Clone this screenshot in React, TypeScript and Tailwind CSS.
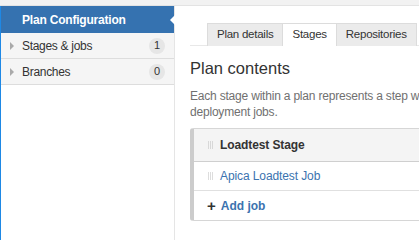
import React from 'react';

function Badge({ n }: { n: number }) {
  return (
    <span className="flex h-[16px] min-w-[16px] items-center justify-center rounded-full bg-[#e6e6e6] px-[4px] text-[11px] text-[#333]">
      {n}
    </span>
  );
}

function Grip() {
  return (
    <svg width="6" height="9" viewBox="0 0 6 9" className="shrink-0">
      {[0, 1, 2].map((c) =>
        [0, 1, 2, 3].map((r) => (
          <rect key={`${c}-${r}`} x={c * 2} y={r * 2 + 0.5} width="1" height="1" fill="#bbb" />
        ))
      )}
    </svg>
  );
}

function NavRow({ label, count }: { label: string; count: number }) {
  return (
    <div className="flex h-[26px] items-center border-b border-[#dddddd] bg-[#f5f5f5] pl-[9px] pr-[9px]">
      <span className="mr-[8px] h-0 w-0 border-y-[4px] border-l-[4px] border-y-transparent border-l-[#aaa]" />
      <span className="flex-1 text-[12px] tracking-[-0.3px] text-[#333]">{label}</span>
      <Badge n={count} />
    </div>
  );
}

const tab = 'mb-[-1px] flex h-[23px] shrink-0 items-center whitespace-nowrap px-[9px] text-[11.5px] tracking-[-0.25px] text-[#333]';

export default function App() {
  return (
    <div className="h-[240px] w-[419px] overflow-hidden bg-white font-['Liberation_Sans',Arial,sans-serif]">
      <div className="h-[6px] border-b border-[#e3e3e3] bg-[#f2f2f2]" />
      <div className="flex h-[234px]">
        {/* sidebar */}
        <aside className="relative w-[175px] shrink-0 border-l border-l-[#1e88e5] border-r border-r-[#e5e5e5]">
          <div className="relative flex h-[27px] items-center bg-[#3572b0] pl-[21px] text-[12px] font-bold tracking-[-0.2px] text-white">
            Plan Configuration
            <span className="absolute right-[-1px] top-[9px] h-0 w-0 border-y-[5px] border-r-[5px] border-y-transparent border-r-white" />
          </div>
          <NavRow label="Stages & jobs" count={1} />
          <NavRow label="Branches" count={0} />
        </aside>

        {/* main */}
        <main className="min-w-0 flex-1 overflow-hidden pl-[15px] pt-[17px]">
          <div className="flex w-[600px] border-b border-[#e8e8e8] pl-[17px]">
            <div className={`${tab} border border-b-0 border-[#dcdcdc] bg-[#ebebeb]`}>Plan details</div>
            <div className={`${tab} border-t border-[#dcdcdc] bg-white`}>Stages</div>
            <div className={`${tab} border border-b-0 border-[#dcdcdc] bg-[#ebebeb]`}>Repositories</div>
            <div className={`${tab} ml-[2px] w-[60px] border border-b-0 border-[#dcdcdc] bg-[#ebebeb]`} />
          </div>

          <h2 className="mt-[10px] whitespace-nowrap text-[16.5px] leading-[24px] text-[#333]">Plan contents</h2>

          <p className="mt-[8px] w-[600px] whitespace-nowrap text-[12px] leading-[16px] tracking-[-0.2px] text-[#707070]">
            Each stage within a plan represents a step within the build process and contains one or more
            <br />
            deployment jobs.
          </p>

          <div className="mt-[8px] w-[560px] overflow-hidden rounded-l-[3px] border border-l-[4px] border-[#d6d6d6] border-l-[#cccccc]">
            <div className="flex h-[33px] items-center gap-[6px] border-b border-[#cfcfcf] bg-[#f4f4f4] pl-[14px]">
              <Grip />
              <span className="text-[12px] font-bold tracking-[-0.1px] text-[#333]">Loadtest Stage</span>
            </div>
            <div className="flex h-[29px] items-center gap-[6px] border-b border-[#e0e0e0] bg-white pl-[14px]">
              <Grip />
              <span className="text-[12px] tracking-[-0.1px] text-[#3b73af]">Apica Loadtest Job</span>
            </div>
            <div className="flex h-[29px] items-center gap-[5px] bg-white pl-[13px] text-[12px] font-bold text-[#3b73af]">
              <span className="text-[15px] leading-none text-[#333]">+</span>
              <span>Add job</span>
            </div>
          </div>
        </main>
      </div>
    </div>
  );
}
